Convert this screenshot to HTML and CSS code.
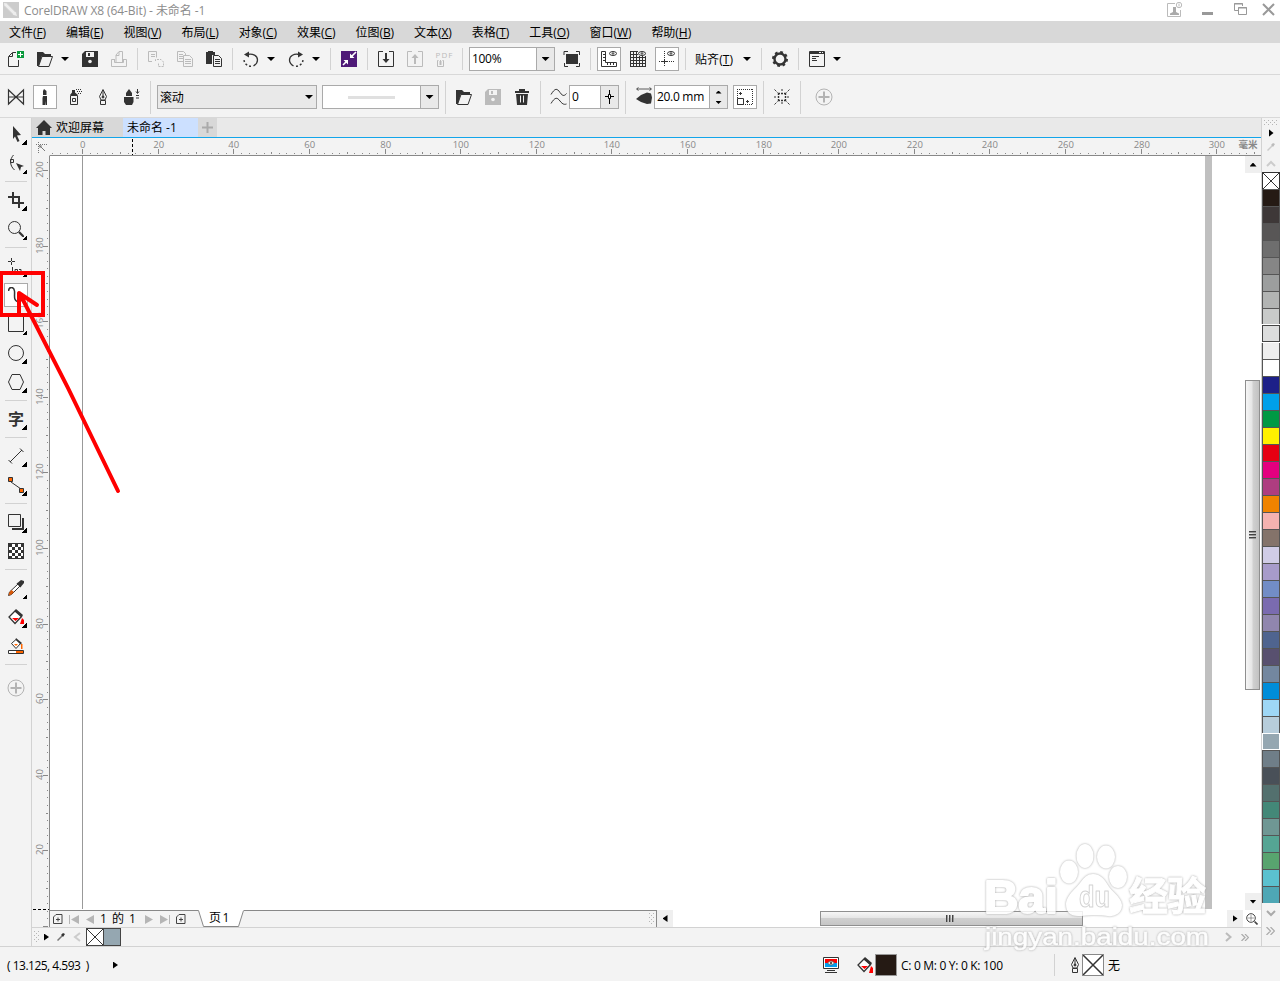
FILE: index.html
```html
<!DOCTYPE html>
<html lang="zh-CN">
<head>
<meta charset="UTF-8">
<meta name="viewport" content="width=device-width, initial-scale=1.0">
<title>CorelDRAW X8 (64-Bit) - 未命名 -1</title>
<link rel="stylesheet" href="styles.css">
</head>
<body>

<div class="app">
  <div class="titlebar">
    <svg class="logo" width="16" height="16" viewBox="0 0 16 16"><path d="M0 0h16v16H0z" fill="#ccc"/><path d="M1 1l3 .5 9 9 1 3.500-3.500-1-9-9z" fill="#eee"/><path d="M2 4l8 8M4 2l8 8" stroke="#ddd"/></svg>
    <span class="title">CorelDRAW X8 (64-Bit) - 未命名 -1</span>
    <div class="window-buttons">
      <svg width="16" height="16" viewBox="0 0 16 16" fill="none" stroke="#bbb"><path d="M8 1.500H.5v13h13V8"/><path d="M3 13v-1.500l3-1.500V5h3v5l3 1.500V13z" fill="#aaa" stroke="none"/><circle cx="12" cy="3" r="2.700"/><path d="M12 1.500v3"/></svg>
      <svg width="11" height="16" viewBox="0 0 11 16"><path d="M0 10h11v3H0z" fill="#999"/></svg>
      <svg width="14" height="16" viewBox="0 0 14 16" fill="none" stroke="#999"><path d="M4 8.500H.5v-7h8V4M0 2h9"/><path d="M4.500 5.500h8v7h-8zM4 6h9"/></svg>
      <svg width="13" height="16" viewBox="0 0 13 16" fill="none" stroke="#999" stroke-width="2"><path d="M1 2l11 11M12 2L1 13"/></svg>
    </div>
  </div>

  <div class="menubar">
    <span>文件(<u>F</u>)</span>
    <span>编辑(<u>E</u>)</span>
    <span>视图(<u>V</u>)</span>
    <span>布局(<u>L</u>)</span>
    <span>对象(<u>C</u>)</span>
    <span>效果(<u>C</u>)</span>
    <span>位图(<u>B</u>)</span>
    <span>文本(<u>X</u>)</span>
    <span>表格(<u>T</u>)</span>
    <span>工具(<u>O</u>)</span>
    <span>窗口(<u>W</u>)</span>
    <span>帮助(<u>H</u>)</span>
  </div>

  <!-- standard toolbar -->
  <div class="toolbar standard">
    <svg class="icon" viewBox="0 0 16 16"><path d="M8 1.500H4.500l-4 4v10h10V9M4.500 2v3.500H1" fill="none" stroke="#333"/><path d="M9 0h7v7H9z" fill="#0a9a3c"/><path d="M12.500 1v5M10 3.500h5" stroke="#fff"/></svg>
    <svg class="icon" viewBox="0 0 16 16"><path d="M0 15V1h6l2 2h6v2H5L2 15z" fill="#333"/><path d="M5 5.500h10.500L12 15.500H1.500z" fill="#f3f3f3" stroke="#333"/></svg>
    <i class="caret"></i>
    <svg class="icon" viewBox="0 0 16 16"><path d="M3 0h13v16H0V3z" fill="#333"/><path d="M4 1h8v5H4z" fill="#f3f3f3"/><path d="M6 2h2v3H6z" fill="#333"/><circle cx="8" cy="10.500" r="1.800" fill="#f3f3f3"/></svg>
    <svg class="icon" viewBox="0 0 16 16" fill="none" stroke="#bbb"><path d="M5 11.500V4l3-3.500h3.500v11M8 1v3.500H5"/><path d="M3.500 8.500h-3v7h15v-7h-3M3.500 8v3.500h9V8"/></svg>
    <i class="sep"></i>
    <svg class="icon" viewBox="0 0 16 16" fill="none" stroke="#bbb"><path d="M4 10.500H.5V.5h8v6M3 3.500h4M3 5.500h4"/><path d="M7.500 10v-1.500h5M9 8.500h4l2.500 2.500v4.500h-5v-4" stroke-dasharray="2 1"/></svg>
    <svg class="icon" viewBox="0 0 16 16" fill="none" stroke="#bbb"><path d="M6 10.500H.5V.5h6l2 2V4M2 3.500h4M2 5.500h4M2 7.500h4"/><path d="M6.500 4.500h6l3 3v8h-9zM8 8.500h6M8 10.500h6M8 12.500h6"/></svg>
    <svg class="icon" viewBox="0 0 16 16"><path d="M0 1h2V0h5v1h2v3H6v9H0z" fill="#333"/><path d="M7.500 4.500h5l3 3v8h-8z" fill="#f3f3f3" stroke="#333"/><path d="M9 8.500h5M9 10.500h5M9 12.500h5" stroke="#333"/></svg>
    <i class="sep"></i>
    <svg class="icon" viewBox="0 0 16 16" fill="none" stroke="#333"><path d="M4 3.500C10 2 14.500 5 14.500 9c0 3-1.500 4.500-4 6" stroke-width="1.300"/><path d="M8 15.300A7 7 0 0 1 1 9" stroke-width="1.500" stroke-dasharray="2 2"/><path d="M6 .5v6L1 3.500z" fill="#333" stroke="none"/></svg>
    <i class="caret"></i>
    <svg class="icon" viewBox="0 0 16 16" fill="none" stroke="#333"><path d="M11.500 3.500C6 2 1.500 5 1.500 9c0 3 1.500 4.500 4 6" stroke-width="1.300"/><path d="M8 15.300A7 7 0 0 0 15 9" stroke-width="1.500" stroke-dasharray="2 2"/><path d="M10 .5v6l5-3z" fill="#333" stroke="none"/></svg>
    <i class="caret"></i>
    <i class="sep"></i>
    <svg class="icon" viewBox="0 0 16 16"><path d="M0 0h16v16H0z" fill="#4f1a78"/><path d="M15 1l-5 5M2 14l4-4" stroke="#fff" stroke-width="1.600"/><path d="M9 2.500V7h4.500zM2.500 9H7v4.500z" fill="#fff"/></svg>
    <i class="sep"></i>
    <svg class="icon" viewBox="0 0 16 16" fill="none" stroke="#333"><path d="M5 .5H.5v15h15V.5H11"/><path d="M8 2v8" stroke-width="2"/><path d="M4.500 8h7L8 12z" fill="#333" stroke="none"/></svg>
    <svg class="icon" viewBox="0 0 16 16" fill="none" stroke="#bbb"><path d="M5 .5H.5v15h15V.5H11"/><path d="M8 5v8" stroke-width="2"/><path d="M4.500 7h7L8 3z" fill="#bbb" stroke="none"/></svg>
    <svg class="icon pdf" viewBox="0 0 16 16" fill="none" stroke="#bbb"><text x="-.5" y="6.500" textLength="17">PDF</text><path d="M2.500 9.500h-1v6h6v-6h-1M4.500 14V9M3 11h3M3 13h3"/></svg>
    <i class="sep"></i>
    <div class="combo zoom-level"><span>100%</span><b><i class="caret"></i></b></div>
    <svg class="icon" viewBox="0 0 16 16"><path d="M2 3h12v10H2z" fill="#333"/><path d="M0 4V.5h4M12 .5h3.500V4M15.500 12v3.500H12M4 15.500H.5V12" fill="none" stroke="#333"/></svg>
    <i class="sep"></i>
    <div class="toggle"><svg viewBox="0 0 16 16" fill="none" stroke="#333"><path d="M.5.500h4v11h11v4H.5zM2 3.500h2M2 6.500h2M2 9.500h2M6.500 12v2M9.500 12v2M12.500 12v2"/><ellipse cx="12" cy="2.500" rx="3.500" ry="2"/><circle cx="12" cy="2.500" r=".8"/></svg></div>
    <svg class="icon" viewBox="0 0 16 16" fill="none" stroke="#333"><path d="M.5 0v16M3.500 0v16M6.500 0v16M9.500 5v11M12.500 5v11M15.500 5v11M0 .5h8M0 3.500h8M0 6.500h16M0 9.500h16M0 12.500h16M0 15.500h16"/><ellipse cx="12" cy="2.500" rx="3.500" ry="2"/><circle cx="12" cy="2.500" r=".8"/></svg>
    <div class="toggle"><svg viewBox="0 0 16 16" fill="none" stroke="#333"><path d="M5.500 0v16M0 10.500h16" stroke-dasharray="1 1"/><path d="M5.500 8v5M3 10.500h5"/><ellipse cx="12" cy="2.500" rx="3.500" ry="2"/><circle cx="12" cy="2.500" r=".8"/></svg></div>
    <i class="sep"></i>
    <span class="snap">贴齐(<u>T</u>)</span>
    <i class="caret"></i>
    <i class="sep"></i>
    <svg class="icon" viewBox="0 0 16 16" fill="none" stroke="#333"><circle cx="8" cy="8" r="5.500" stroke-width="2.400"/><circle cx="8" cy="8" r="7" stroke-width="2" stroke-dasharray="2.750 2.750"/></svg>
    <i class="sep"></i>
    <svg class="icon" viewBox="0 0 16 16" fill="none" stroke="#333"><path d="M.5.500h15v15H.5zM0 2.500h16"/><path d="M0 1.500h10M12 1.500h1M14 1.500h1M3 5.500h7M3 7.500h4M3 9.500h5"/></svg>
    <i class="caret"></i>
  </div>

  <!-- property bar -->
  <div class="toolbar property">
    <svg class="icon" viewBox="0 0 16 16" fill="none" stroke="#333"><path d="M.5 1v14L8 8zM15.500 1v14L8 8zM0 8h16" stroke-width="1.200"/></svg>
    <div class="toggle"><svg viewBox="0 0 16 16" fill="#333"><path d="M7 0l2.500 2v4H6V2z"/><path d="M6 7h4v9H8.500v-4L8 16H5.500V9z"/></svg></div>
    <svg class="icon" viewBox="0 0 16 16" fill="none" stroke="#333"><path d="M4.500 6.500h7v9h-7zM6.500 9.500h3v3h-3z"/><path d="M4 6l2-2.500V1h3v2.500L12 6z" fill="#333" stroke="none"/><path d="M10 .5h6M11 2.500h5M12 4.500h4" stroke-dasharray="1 1"/></svg>
    <svg class="icon" viewBox="0 0 16 16" fill="none" stroke="#333"><path d="M8 .5l3.500 7L10 11H6L4.500 7.500zM8 1v7M5.500 11.500h5v4h-5z"/><circle cx="8" cy="8" r="1" fill="#333"/></svg>
    <svg class="icon" viewBox="0 0 16 16" fill="#333"><path d="M5 0l3 4v3H2V4zM0 8h9.500v5L8 16H2l-2-3z"/><path d="M13.500 0v4M12 2.500l1.500 2 1.500-2M12 6.500h3M12 9h3" fill="none" stroke="#333"/></svg>
    <i class="sep"></i>
    <div class="combo style-list"><span>滚动</span><i class="caret"></i></div>
    <div class="combo stroke-list"><span></span><b><i class="caret"></i></b></div>
    <i class="sep"></i>
    <svg class="icon" viewBox="0 0 16 16"><path d="M0 15V1h6l2 2h6v2H5L2 15z" fill="#333"/><path d="M5 5.500h10.500L12 15.500H1.500z" fill="#f3f3f3" stroke="#333"/></svg>
    <svg class="icon" viewBox="0 0 16 16"><path d="M3 0h13v16H0V3z" fill="#bbb"/><path d="M4 1h8v5H4z" fill="#f3f3f3"/><path d="M6 2h2v3H6z" fill="#bbb"/><circle cx="8" cy="10.500" r="1.800" fill="#f3f3f3"/></svg>
    <svg class="icon" viewBox="0 0 16 16"><path d="M5 0h6v2h4v2H1V2h4zM2 5h12l-1 11H3z" fill="#333"/><path d="M6.500 6.500v7M9.500 6.500v7" stroke="#f3f3f3"/></svg>
    <i class="sep"></i>
    <svg class="icon smooth" viewBox="0 0 16 16" fill="none" stroke="#333"><path d="M0 5.500C4-1 6-1 9 3.500s5 3 6.500 1"/><path d="M0 14.500C4 8 6 8 9 12s5 3.500 6.500 3"/></svg>
    <div class="combo smoothing"><span>0</span><b><svg width="9" height="14" viewBox="0 0 9 14" fill="none" stroke="#000"><path d="M4.500 0v14M0 6.500h9"/><path d="M3.500 4.500h2v4h-2z" fill="#fff"/></svg></b></div>
    <i class="sep"></i>
    <svg class="icon smooth" viewBox="0 0 16 16"><path d="M0 10l5-4 6-2.500 4 1 1 4-1 6-4 .500-6-2z" fill="#333"/><path d="M1 1.500h14M2.500 0L.5 1.500l2 1.500M13.500 0l2 1.500-2 1.500" fill="none" stroke="#333" stroke-width=".8" transform="translate(0 -1.500)"/></svg>
    <div class="combo width"><span>20.0 mm</span><b class="spin"><i></i><i></i></b></div>
    <div class="toggle"><svg viewBox="0 0 16 16" fill="none" stroke="#333"><path d="M0 .5h16M0 15.500h16M.5 0v16M15.500 0v16" stroke-dasharray="1 1"/><path d="M.5 9.500h6v6h-6z" fill="#fff"/><path d="M3.500 3v3M2 4.500h3M9 12.500h3M10.500 11v3"/></svg></div>
    <i class="sep"></i>
    <svg class="icon" viewBox="0 0 16 16" fill="none" stroke="#333"><path d="M4 4.500h8M4 11.500h8M4.500 4v8M11.500 4v8" stroke-width="1.400" stroke-dasharray="2 1"/><path d="M.5.500l3 3M15.500.5l-3 3M.5 15.500l3-3M15.500 15.500l-3-3M8 0v3M8 13v3M0 8h3M13 8h3" stroke-dasharray="2 1"/></svg>
    <i class="sep"></i>
    <svg class="plus" width="18" height="18" viewBox="0 0 18 18" fill="none" stroke="#b3b3b3"><circle cx="9" cy="9" r="8"/><path d="M9 3.500v11M3.500 9h11" stroke-width="2"/></svg>
  </div>

  <div class="workspace">
    <div class="toolbox">
      <div class="tool fly"><svg viewBox="0 0 16 16"><path d="M5 0l8 9-4 .5 2.500 5.500-2 1-2.500-5.500L5 13z" fill="#333"/></svg></div>
      <div class="tool fly"><svg viewBox="0 0 16 16" fill="none" stroke="#333"><path d="M5.500 0C2 4 1 10 6.500 15M2.500 4.500h3v3h-3z"/><path d="M8 8l8 3-3 1-1 4z" fill="#333" stroke="none"/></svg></div>
      <i class="rule"></i>
      <div class="tool fly"><svg viewBox="0 0 16 16" fill="none" stroke="#333" stroke-width="2"><path d="M5 0v11h11M0 5h11v11"/></svg></div>
      <div class="tool fly"><svg viewBox="0 0 16 16" fill="none" stroke="#333"><circle cx="6.500" cy="6.500" r="6"/><path d="M11 11l5 5" stroke-width="2.200"/></svg></div>
      <i class="rule"></i>
      <div class="tool fly"><svg viewBox="0 0 16 16" fill="none" stroke="#333"><path d="M3.500 0v3M3.500 4v3M0 3.500h3M4 3.500h3M4.500 9v6M7 15V11.500h2.500V13M11 11.500h2V14"/></svg></div>
      <div class="tool active"><svg viewBox="0 0 16 16" fill="none" stroke="#333"><path d="M.5 4C1-1 6-.5 6.500 4S5 13 10 15c3 0 5-3 5-5" stroke-width="1.500"/></svg></div>
      <div class="tool fly"><svg viewBox="0 0 16 16" fill="none" stroke="#333"><path d="M.5.500h15v15H.5z"/></svg></div>
      <div class="tool fly"><svg viewBox="0 0 16 16" fill="none" stroke="#333"><circle cx="8" cy="8" r="7.500"/></svg></div>
      <div class="tool fly"><svg viewBox="0 0 16 16" fill="none" stroke="#333"><path d="M4 .5h8L15.500 8 12 15.500H4L.5 8z"/></svg></div>
      <i class="rule"></i>
      <div class="tool fly text-tool"><span>字</span></div>
      <i class="rule"></i>
      <div class="tool fly"><svg viewBox="0 0 16 16" fill="none" stroke="#333"><path d="M2 14L14 2M.5 12l3.500 3.500M12 .5L15.500 4"/></svg></div>
      <div class="tool fly"><svg viewBox="0 0 16 16" fill="none" stroke="#333"><path d="M3 5l10 7"/><path d="M.5.500h4v4h-4zM11.500 11.500h4v4h-4z" fill="#f60"/></svg></div>
      <i class="rule"></i>
      <div class="tool fly"><svg viewBox="0 0 16 16"><path d="M4 14h10V4h2v12H4z" fill="#333"/><path d="M.5.500h12v12H.5z" fill="#f3f3f3" stroke="#333"/></svg></div>
      <div class="tool"><svg viewBox="0 0 16 16"><path d="M0 0h16v16H0z" fill="#333"/><path d="M4 1h3v3H4zM10 1h3v3h-3zM1 4h3v3H1zM7 4h3v3H7zM13 4h2v3h-2zM4 7h3v3H4zM10 7h3v3h-3zM1 10h3v3H1zM7 10h3v3H7zM13 10h2v3h-2zM4 13h3v2H4zM10 13h3v2h-3z" fill="#fff"/></svg></div>
      <i class="rule"></i>
      <div class="tool fly"><svg viewBox="0 0 16 16"><path d="M.5 15.500l1-3.500L10 4l2 2-8.500 8.500z" fill="#fff" stroke="#333"/><path d="M.5 15.500l1-3.500 2-2L6 12l-2.500 2.500z" fill="#d9590a"/><path d="M8.500 3.500l1.500-1L13 0l3 1v2l-2.500 3-1 1.500z" fill="#333"/></svg></div>
      <div class="tool fly"><svg viewBox="0 0 16 16"><path d="M7.500 1.500l6 6-6.500 7L1 8z" fill="#fff" stroke="#333" stroke-width="1.300"/><path d="M8 0l7 6-1.500 2.500-7-6z" fill="#333"/><path d="M4 9h7l-3.500 3zM14 9l2 2v4h-4z" fill="#f00"/></svg></div>
      <div class="tool"><svg viewBox="0 0 16 16"><path d="M8 1.500l4.500 4-4.500 5-4.500-5z" fill="#fff" stroke="#333"/><path d="M8 0l6 5-1.500 1.500-5-5z" fill="#333"/><path d="M6 6h4l-2 2zM13 6h1.500v5H13z" fill="#f60"/><path d="M.5 12.500h15v3H.5z" fill="#fff" stroke="#333"/><path d="M8 13h7v2H8z" fill="#f60"/></svg></div>
      <i class="rule"></i>
      <div class="tool add"><svg viewBox="0 0 18 18" fill="none" stroke="#b3b3b3"><circle cx="9" cy="9" r="8"/><path d="M9 3.500v11M3.500 9h11" stroke-width="2"/></svg></div>
    </div>

    <div class="document">
      <div class="tabs">
        <div class="tab welcome"><svg width="16" height="15" viewBox="0 0 16 15"><path d="M8 0l8 8h-2v7H9.500v-4h-3v4H2V8H0z" fill="#333"/></svg><span>欢迎屏幕</span></div>
        <div class="tab current">未命名 -1</div>
        <div class="tab new"><svg width="11" height="11" viewBox="0 0 11 11"><path d="M5.500 0v11M0 5.500h11" stroke="#aaa" stroke-width="2"/></svg></div>
      </div>
      <div class="ruler-row">
        <div class="origin"><svg width="11" height="11" viewBox="0 0 11 11" fill="none" stroke="#777"><path d="M2.500 0v11M0 2.500h11" stroke-dasharray="1 1"/><path d="M3 3l6 6M4 6V4h2"/></svg></div>
        <svg class="ruler-h" id="rulerH" width="1211" height="17"></svg>
      </div>
      <div class="view">
        <svg class="ruler-v" id="rulerV" width="17" height="771"></svg>
        <div class="stage">
          <div class="canvas-row">
            <div class="canvas"><div class="page"></div></div>
            <div class="scroll-v">
              <div class="scroll-btn"><i class="arrow up"></i></div>
              <div class="thumb"><i></i><i></i><i></i></div>
              <div class="scroll-btn"><i class="arrow down"></i></div>
            </div>
          </div>
          <div class="page-nav">
            <div class="pager">
              <svg width="10" height="11" viewBox="0 0 10 11" fill="none" stroke="#444"><path d="M3 .5h6v9H.5V3zM3 5.500h4M5 3.500v4"/></svg>
              <svg width="10" height="9" viewBox="0 0 10 9" fill="#b5b5b5"><path d="M0 0h1v9H0zM10 0v9L2 4.500z"/></svg>
              <svg width="8" height="9" viewBox="0 0 8 9" fill="#b5b5b5"><path d="M8 0v9L0 4.500z"/></svg>
              <span class="count">1 的 1</span>
              <svg width="8" height="9" viewBox="0 0 8 9" fill="#b5b5b5"><path d="M0 0v9l8-4.500z"/></svg>
              <svg width="10" height="9" viewBox="0 0 10 9" fill="#b5b5b5"><path d="M9 0h1v9H9zM0 0v9l8-4.500z"/></svg>
              <svg width="10" height="11" viewBox="0 0 10 11" fill="none" stroke="#444"><path d="M3 .5h6v9H.5V3zM3 5.500h4M5 3.500v4"/></svg>
            </div>
            <div class="page-tab">
              <svg width="46" height="17" viewBox="0 0 46 17"><path d="M0 0h46v.5h-1L40.500 16h-35L.5.5H0z" fill="#fff"/><path d="M0 .5h.5L5.500 16.500h35L45.500.5" fill="#fff" stroke="#888"/></svg>
              <span>页1</span>
            </div>
            <div class="nav-rest"><i class="grip"></i></div>
            <div class="scroll-h">
              <div class="scroll-btn"><i class="arrow left"></i></div>
              <div class="thumb"><i></i><i></i><i></i></div>
              <div class="scroll-btn"><i class="arrow right"></i></div>
              <svg class="nav-zoom" width="12" height="12" viewBox="0 0 12 12" fill="none" stroke="#444"><circle cx="5" cy="5" r="4.300"/><path d="M8.500 8.500l3 3" stroke-width="1.600"/><path d="M5 2.500v5M2.500 5h5" stroke-dasharray="1 1"/></svg>
            </div>
          </div>
        </div>
      </div>
      <div class="doc-palette">
        <i class="grip"></i>
        <i class="arrow right"></i>
        <svg width="8" height="8" viewBox="0 0 8 8"><path d="M.5 7.500L5 3" stroke="#777" stroke-width="1.500"/><path d="M4 2l2-2 2 1-2 3z" fill="#333"/></svg>
        <svg width="8" height="10" viewBox="0 0 8 10" fill="none" stroke="#ccc" stroke-width="2"><path d="M7 1L2 5l5 4"/></svg>
        <div class="doc-swatch none"><svg viewBox="0 0 16 16"><path d="M0 0l16 16M16 0L0 16" stroke="#333"/></svg></div>
        <div class="doc-swatch grey"></div>
        <svg class="doc-next" width="7" height="10" viewBox="0 0 7 10" fill="none" stroke="#bbb" stroke-width="2"><path d="M1 1l4.500 4L1 9"/></svg>
        <svg class="doc-more" width="8" height="7" viewBox="0 0 8 7" fill="none" stroke="#aaa" stroke-width="1.200"><path d="M.5 0L4 3.500.5 7M4 0l3.500 3.500L4 7"/></svg>
      </div>
    </div>

    <div class="palette">
      <div class="palette-head">
        <i class="grip"></i>
        <i class="arrow right"></i>
        <svg width="8" height="8" viewBox="0 0 8 8"><path d="M.5 7.500L5 3" stroke="#ccc" stroke-width="1.500"/><path d="M4 2l2-2 2 1-2 3z" fill="#bbb"/></svg>
        <svg class="chev" width="10" height="7" viewBox="0 0 10 7" fill="none" stroke="#ccc" stroke-width="2"><path d="M1 6l4-4 4 4"/></svg>
      </div>
      <div class="swatches" id="swatches"></div>
      <svg class="chev" width="10" height="7" viewBox="0 0 10 7" fill="none" stroke="#aaa" stroke-width="2"><path d="M1 1l4 4 4-4"/></svg>
      <svg class="more" width="9" height="8" viewBox="0 0 9 8" fill="none" stroke="#aaa" stroke-width="1.200"><path d="M.5 0l4 4-4 4M4.500 0l4 4-4 4"/></svg>
    </div>
  </div>

  <div class="statusbar">
    <span class="coords">( 13.125, 4.593&nbsp; )</span>
    <i class="arrow right"></i>
    <svg class="proof" width="16" height="16" viewBox="0 0 16 16"><path d="M.5.500h15v11H.5z" fill="#fff" stroke="#333"/><path d="M2 2h12v4H2z" fill="#f00"/><path d="M2 6h12v4H2z" fill="#00a0f0"/><path d="M4.500 6Q8 2 11.500 6 8 10 4.500 6z" fill="#eee" stroke="#555" stroke-width=".7"/><circle cx="8" cy="6" r="1.200" fill="#555"/><path d="M4 13.500h8M2 15.500h12" stroke="#333"/></svg>
    <svg class="bucket" width="16" height="16" viewBox="0 0 16 16"><path d="M7.500 1.500l6 6-6.500 7L1 8z" fill="#fff" stroke="#333" stroke-width="1.300"/><path d="M8 0l7 6-1.500 2.500-7-6z" fill="#333"/><path d="M4 9h7l-3.500 3zM14 9l2 2v5h-4z" fill="#f00"/></svg>
    <div class="fill-box"></div>
    <span class="cmyk">C: 0 M: 0 Y: 0 K: 100</span>
    <i class="status-sep"></i>
    <svg class="nib" width="10" height="16" viewBox="0 0 10 16" fill="none" stroke="#333"><path d="M5 .5l3.500 7L7 11H3L1.500 7.500zM5 1v7M2.500 11.500h5v4h-5z"/><circle cx="5" cy="8" r="1" fill="#333"/></svg>
    <div class="outline-box"><svg viewBox="0 0 20 20"><path d="M0 0l20 20M20 0L0 20" stroke="#333" stroke-width="1.500"/></svg></div>
    <span>无</span>
  </div>

  <!-- pointer to the artistic media tool -->
  <svg class="annotation" width="130" height="240" viewBox="0 260 130 240" fill="none" stroke="#f00" stroke-width="4">
    <path d="M1 273h42v42H1z"/>
    <path d="M118 491L68 388 20 294M37 305L19 293v22" stroke-linecap="round" stroke-linejoin="round"/>
  </svg>

  <svg class="watermark" width="240" height="120" viewBox="975 835 240 120">
    <g class="mark">
      <ellipse cx="1069" cy="872" rx="8" ry="10.500"/>
      <ellipse cx="1085" cy="856" rx="7.500" ry="11"/>
      <ellipse cx="1106" cy="857" rx="8" ry="10.500"/>
      <ellipse cx="1118" cy="877" rx="8" ry="10"/>
      <path d="M1093 875c8 0 12 7 15 12s13 11 13 18-6 11-13 10c-6-1-10-1-15-1s-9 1-15 1c-8 0-11-5-11-11s6-12 11-17 7-12 15-12z"/>
      <text x="984" y="913" font-size="47" textLength="74" lengthAdjust="spacingAndGlyphs">Bai</text>
      <text class="du" x="1079" y="907" font-size="29" textLength="31" lengthAdjust="spacingAndGlyphs">du</text>
      <text class="cjk" x="1129" y="910" font-size="39" textLength="77">经验</text>
      <text class="url" x="985" y="945" font-size="23.500" textLength="224" lengthAdjust="spacingAndGlyphs">jingyan.baidu.com</text>
    </g>
  </svg>
</div>

<script>
var SVG = "http://www.w3.org/2000/svg";
var PX_PER_MM = 3.78;

function add(parent, name, attrs, text) {
  var el = document.createElementNS(SVG, name);
  for (var key in attrs) {
    el.setAttribute(key, attrs[key]);
  }
  if (text !== undefined) {
    el.textContent = text;
  }
  parent.appendChild(el);
}

function drawHorizontalRuler() {
  var ruler = document.getElementById("rulerH");
  for (var mm = -8; mm <= 310; mm += 2) {
    var x = Math.floor(32.7 + mm * PX_PER_MM);
    var size = mm % 20 === 0 ? 5 : mm % 10 === 0 ? 2 : 1;
    add(ruler, "rect", { x: x, y: 16 - size, width: 1, height: size });
    if (mm >= 0 && mm % 20 === 0) {
      add(ruler, "text", { x: x + 0.8, y: 10, "text-anchor": "middle" }, mm);
    }
  }
  add(ruler, "text", { x: 1198, y: 10, "text-anchor": "middle", "class": "unit" }, "毫米");
  add(ruler, "path", { d: "M82.500 1v16", "class": "cursor" });
}

function drawVerticalRuler() {
  var ruler = document.getElementById("rulerV");
  for (var mm = 202; mm >= 0; mm -= 2) {
    var y = Math.floor(14.5 + (200 - mm) * PX_PER_MM);
    var size = mm % 20 === 0 ? 5 : mm % 10 === 0 ? 2 : 1;
    add(ruler, "rect", { x: 16 - size, y: y, width: size, height: 1 });
    if (mm > 0 && mm % 20 === 0) {
      add(ruler, "text", { transform: "translate(11 " + (y - 0.5) + ") rotate(-90)", "text-anchor": "middle" }, mm);
    }
  }
  add(ruler, "path", { d: "M1 753.500h16", "class": "cursor" });
}

var colors = [
  "#251a14", "#3e3838", "#585656", "#6e6e6e", "#868686", "#9c9e9e", "#b2b4b3", "#c8cac9",
  "#dcdddd", "#eeeeee", "#ffffff", "#1d2088", "#00a0e9", "#009944", "#fff100", "#e60012",
  "#e4007f", "#ae3d80", "#f08300", "#f4b2b0", "#84736a", "#d0cce6", "#a79bca", "#728dc6",
  "#7a6bb0", "#9086ae", "#4f648f", "#58506f", "#73879f", "#008dd9", "#9ed7f6", "#b7cddb",
  "#95a7b1", "#6f7e88", "#495058", "#53706e", "#438878", "#6f9794", "#55a594", "#58a46f",
  "#5bc1cf", "#4ea7b5"
];

function fillPalette() {
  var box = document.getElementById("swatches");
  box.innerHTML = '<div class="swatch none"><svg viewBox="0 0 16 16"><path d="M0 0l16 16M16 0L0 16" stroke="#333"/></svg></div>';
  colors.forEach(function (color) {
    var swatch = document.createElement("div");
    swatch.className = "swatch";
    if (color === "#dcdddd") swatch.className += " inset";
    if (color === "#95a7b1") swatch.className += " picked";
    swatch.style.backgroundColor = color;
    box.appendChild(swatch);
  });
}

drawHorizontalRuler();
drawVerticalRuler();
fillPalette();
</script>

</body>
</html>
```

FILE: styles.css
```css
* {
  box-sizing: border-box;
}
body {
  margin: 0;
  font-family: "Open Sans", "Noto Sans CJK SC", sans-serif;
  font-size: 12px;
  color: #000;
  background-color: #f3f3f3;
}
svg {
  display: block;
  flex: none;
}
.app {
  position: relative;
  display: flex;
  flex-direction: column;
  width: 1280px;
  height: 981px;
  overflow: hidden;
}

/* title and menu */
.titlebar {
  display: flex;
  align-items: center;
  height: 21px;
  padding: 0 5px 0 3px;
  background-color: #fff;
  color: #8c8c8c;
}
.logo {
  margin: 0 5px 2px 0;
}
.title {
  letter-spacing: -0.09px;
  line-height: 21px;
}
.window-buttons {
  display: flex;
  margin-left: auto;
  padding-bottom: 1px;
}
.window-buttons svg:nth-child(2) {
  margin-left: 19px;
}
.window-buttons svg:nth-child(3) {
  margin-left: 21px;
}
.window-buttons svg:nth-child(4) {
  margin-left: 14px;
}
.menubar {
  display: flex;
  gap: 20px;
  height: 22px;
  padding-left: 9px;
  line-height: 23px;
  background-color: #d8d8d8;
}
.menubar span {
  letter-spacing: -0.05px;
  white-space: nowrap;
}

/* toolbars */
.toolbar {
  display: flex;
  align-items: center;
  padding-left: 8px;
  padding-top: 1px;
  border-bottom: 1px solid #d8d8d8;
}
.standard {
  height: 32px;
}
.property {
  height: 43px;
  padding-top: 2px;
}
.icon {
  width: 16px;
  height: 16px;
  margin-right: 13px;
  overflow: visible;
}
.sep {
  flex: none;
  width: 1px;
  height: 22px;
  margin: 0 10px 0 -3px;
  background-color: #d2d2d2;
}
.property .sep {
  height: 33px;
}
.caret {
  flex: none;
  width: 8px;
  height: 4px;
  margin: 0 13px 0 -5px;
  background-color: #000;
  clip-path: polygon(0 0, 100% 0, 50% 100%);
}
.pdf text {
  font: 8px "Open Sans", sans-serif;
  fill: #bbb;
  stroke: none;
}
.toggle {
  flex: none;
  width: 24px;
  height: 24px;
  margin: 0 9px 0 -4px;
  padding: 3px;
  border: 1px solid #aaa;
  background-color: #fff;
}
.toggle svg {
  width: 16px;
  height: 16px;
}
.combo {
  flex: none;
  display: flex;
  height: 24px;
  border: 1px solid #aaa;
  background-color: #fff;
  line-height: 21px;
}
.combo span {
  flex: 1;
  padding-left: 2px;
  letter-spacing: -0.3px;
  white-space: nowrap;
}
.combo b {
  display: flex;
  align-items: center;
  justify-content: center;
  width: 18px;
  border-left: 1px solid #aaa;
  background-color: #e9e9e9;
}
.combo .caret {
  margin: 0;
}
.zoom-level {
  width: 86px;
  margin: 0 9px 0 -4px;
}
.snap {
  width: 40px;
  margin: 0 13px 0 -1px;
  letter-spacing: 0.1px;
  white-space: nowrap;
}
.style-list {
  align-items: center;
  width: 160px;
  margin: 0 5px 0 -4px;
  background-color: #e9e9e9;
}
.style-list .caret {
  margin-right: 3px;
}
.stroke-list {
  width: 117px;
  margin-right: 9px;
}
.stroke-list span {
  height: 3px;
  margin: 10px 25px 0;
  background-color: #e0e0e0;
}
.icon.smooth {
  margin-right: 2px;
}
.smoothing {
  width: 50px;
  margin-right: 9px;
}
.width {
  width: 74px;
  margin-right: 9px;
}
.combo .spin {
  flex-direction: column;
  gap: 7px;
}
.spin i {
  width: 6px;
  height: 3px;
  background-color: #000;
  clip-path: polygon(50% 0, 100% 100%, 0 100%);
}
.spin i + i {
  transform: scaleY(-1);
}
.plus {
  margin-left: 4px;
}

/* workspace */
.workspace {
  display: flex;
  height: 828px;
}
.toolbox {
  flex: none;
  width: 32px;
  padding-top: 2px;
  border-right: 1px solid #d2d2d2;
}
.tool {
  height: 29px;
  padding: 6px 0 0 8px;
}
.tool svg {
  width: 16px;
  height: 16px;
}
.fly {
  background: linear-gradient(135deg, transparent 50%, #000 50%) 22px 20px / 5px 5px no-repeat;
}
.tool.active {
  height: 24px;
  width: 24px;
  margin: 2px 0 3px 4px;
  padding: 3px;
  border: 1px solid #aaa;
  background: #fff;
}
.tool.add {
  padding: 10px 0 0 7px;
}
.tool.add svg {
  width: 18px;
  height: 18px;
}
.text-tool {
  font-size: 16px;
  font-weight: bold;
  line-height: 16px;
  color: #333;
}
.rule {
  display: block;
  height: 1px;
  margin: 3px 4px 4px 5px;
  background-color: #d2d2d2;
}
.document {
  flex: none;
  display: flex;
  flex-direction: column;
  width: 1229px;
}
.tabs {
  display: flex;
  height: 20px;
  border-bottom: 1px solid #12a5ea;
  background-color: #e9e9e9;
  line-height: 18px;
}
.tab {
  display: flex;
  align-items: center;
  background-color: #d8d8d8;
}
.welcome {
  gap: 4px;
  width: 91px;
  padding-left: 4px;
}
.current {
  width: 75px;
  padding-left: 4px;
  background-color: #cce0ff;
}
.tab.new {
  width: 19px;
  padding-left: 4px;
}
.ruler-row {
  display: flex;
  height: 18px;
}
.origin {
  width: 17px;
  padding: 4px 0 0 4px;
}
.ruler-h {
  box-sizing: content-box;
  border-bottom: 1px solid #888;
  border-left: 1px solid #f3f3f3;
}
.ruler-h,
.ruler-v {
  font: 9.500px "Open Sans", "Noto Sans CJK SC", sans-serif;
  fill: #888;
}
.unit {
  font-weight: bold;
}
.cursor {
  stroke: #000;
  stroke-dasharray: 3 2;
}
.view {
  display: flex;
  height: 771px;
}
.ruler-v {
  box-sizing: content-box;
  border-right: 1px solid #888;
}
.stage {
  flex: 1;
  display: flex;
  flex-direction: column;
}
.canvas-row {
  display: flex;
  height: 754px;
  background-color: #fff;
}
.canvas {
  flex: 1;
}
.page {
  width: 1130px;
  height: 753px;
  margin-left: 32px;
  border-left: 1px solid #999;
  border-right: 7px solid #c0c0c0;
}
.scroll-v {
  display: flex;
  flex-direction: column;
  justify-content: space-between;
  width: 16px;
}
.scroll-btn {
  display: flex;
  align-items: center;
  justify-content: center;
  width: 16px;
  height: 17px;
  background-color: #efefef;
}
.arrow {
  flex: none;
  width: 5px;
  height: 7px;
  background-color: #000;
}
.arrow.up {
  width: 7px;
  height: 4px;
  clip-path: polygon(50% 0, 100% 100%, 0 100%);
}
.arrow.down {
  width: 7px;
  height: 4px;
  clip-path: polygon(0 0, 100% 0, 50% 100%);
}
.arrow.left {
  clip-path: polygon(100% 0, 100% 100%, 0 50%);
}
.arrow.right {
  clip-path: polygon(0 0, 100% 50%, 0 100%);
}
.thumb {
  display: flex;
  align-items: center;
  justify-content: center;
  gap: 1px;
  border: 1px solid #8f8f8f;
}
.scroll-v .thumb {
  flex-direction: column;
  width: 15px;
  height: 310px;
  margin-top: 4px;
  background: linear-gradient(90deg, #f6f6f6, #e6e6e6 45%, #d0d0d0 55%, #c2c2c2);
}
.scroll-v .thumb i {
  width: 7px;
  height: 2px;
  margin-right: 1px;
  background: linear-gradient(#444 50%, #999 50%);
}
.page-nav {
  display: flex;
  height: 17px;
  background-color: #fff;
}
.pager {
  display: flex;
  align-items: center;
  width: 148px;
  padding-left: 3px;
  border-top: 1px solid #888;
  background-color: #f3f3f3;
}
.pager svg:nth-of-type(2) {
  margin-left: 6px;
}
.pager svg:nth-of-type(3) {
  margin-left: 7px;
}
.count {
  width: 38px;
  margin: 0 7px 0 6px;
  letter-spacing: 1px;
  line-height: 14px;
  white-space: nowrap;
}
.pager svg:nth-of-type(5) {
  margin: 0 6px 0 7px;
}
.page-tab {
  display: grid;
  width: 46px;
  background-color: #f3f3f3;
  line-height: 15px;
}
.page-tab > * {
  grid-area: 1 / 1;
}
.page-tab span {
  padding-left: 11px;
  letter-spacing: 1.500px;
}
.nav-rest {
  display: flex;
  justify-content: flex-end;
  align-items: center;
  width: 413px;
  padding-right: 1px;
  border-top: 1px solid #888;
  border-right: 1px solid #888;
  background-color: #f3f3f3;
}
.grip {
  flex: none;
  width: 6px;
  height: 12px;
  background: linear-gradient(#b5b5b5, #b5b5b5) 0 0 / 1px 1px;
  background: conic-gradient(#b5b5b5 25%, transparent 0) 0 1px / 4px 4px,
    conic-gradient(#b5b5b5 25%, transparent 0) 2px 3px / 4px 4px;
  -webkit-mask: conic-gradient(#000 25%, transparent 0) 1px 0 / 2px 2px;
  mask: conic-gradient(#000 25%, transparent 0) 1px 0 / 2px 2px;
}
.scroll-h {
  display: flex;
  flex: 1;
}
.scroll-h .thumb {
  width: 263px;
  height: 15px;
  margin: 1px 144px 0 147px;
  padding-right: 3px;
  background: linear-gradient(#f6f6f6, #e6e6e6 45%, #cfcfcf 50%, #c6c6c6);
}
.scroll-h .thumb i {
  width: 2px;
  height: 7px;
  background: linear-gradient(90deg, #444 50%, #999 50%);
}
.nav-zoom {
  margin: 3px 0 0 3px;
}
.doc-palette {
  display: flex;
  align-items: center;
  height: 19px;
  padding-left: 2px;
  border-top: 1px solid #d2d2d2;
}
.doc-palette .arrow {
  margin: 0 8px 0 4px;
}
.doc-palette svg + svg {
  margin-left: 8px;
}
.doc-swatch {
  width: 18px;
  height: 18px;
  margin-left: -1px;
  border: 1px solid #444;
}
.doc-swatch svg {
  width: 16px;
  height: 16px;
}
.doc-swatch.none {
  margin-left: 5px;
  background-color: #fff;
}
.doc-swatch.grey {
  background-color: #95a7b1;
}
.doc-next {
  margin-left: auto;
}
.doc-palette .doc-more {
  margin: 0 12px 0 9px;
}

/* color palette */
.palette {
  flex: none;
  width: 19px;
  border-left: 1px solid #d2d2d2;
}
.palette-head {
  display: flex;
  flex-direction: column;
  align-items: center;
  height: 54px;
  padding-top: 2px;
}
.palette-head .grip {
  width: 14px;
  height: 6px;
}
.palette-head .arrow {
  height: 8px;
  margin: 3px 0 6px;
}
.palette-head .chev {
  margin: 9px 0 0;
}
.swatches {
  padding-bottom: 1px;
}
.swatch {
  height: 17px;
  border: 1px solid #555;
  border-bottom: 0;
}
.swatch.none {
  height: 18px;
  margin-bottom: -1px;
  border: 1px solid #333;
  background-color: #fff;
}
.swatch svg {
  width: 16px;
  height: 16px;
}
.swatch.inset {
  border: 1px solid #444;
  outline: 1px solid #fff;
}
.swatch.picked {
  border: 1px solid #fff;
}
.palette > .chev {
  margin: 6px 0 0 4px;
}
.more {
  margin: 10px 0 0 4px;
}

/* status bar */
.statusbar {
  display: flex;
  align-items: center;
  height: 35px;
  padding: 2px 0 0 7px;
  border-top: 1px solid #d2d2d2;
}
.coords {
  width: 106px;
  letter-spacing: -0.5px;
  white-space: nowrap;
}
.proof {
  margin-left: 705px;
}
.bucket {
  margin-left: 18px;
}
.fill-box {
  width: 22px;
  height: 22px;
  margin: 0 4px 0 2px;
  border: 1px solid #999;
  background-color: #251a14;
}
.cmyk {
  width: 153px;
  letter-spacing: -0.3px;
  white-space: nowrap;
}
.status-sep {
  width: 1px;
  height: 22px;
  margin-right: 15px;
  background-color: #d2d2d2;
}
.outline-box {
  width: 22px;
  height: 22px;
  margin: 0 4px 0 2px;
  border: 1px solid #888;
  background-color: #fff;
}

/* overlays */
.annotation {
  position: absolute;
  left: 0;
  top: 260px;
}
.watermark {
  position: absolute;
  left: 975px;
  top: 835px;
}
.mark {
  fill: #fff;
  stroke: #fff;
  stroke-width: 2;
  stroke-linejoin: round;
  opacity: 0.85;
  filter: drop-shadow(0 0 1px #999);
  font-family: "Liberation Sans", "Noto Sans CJK SC", sans-serif;
  font-weight: bold;
}
.mark .du {
  stroke: #ccc;
  stroke-width: 1;
}
.mark .cjk {
  stroke-width: 1;
}
.mark .url {
  stroke-width: 0.500;
  font-weight: normal;
}
```
